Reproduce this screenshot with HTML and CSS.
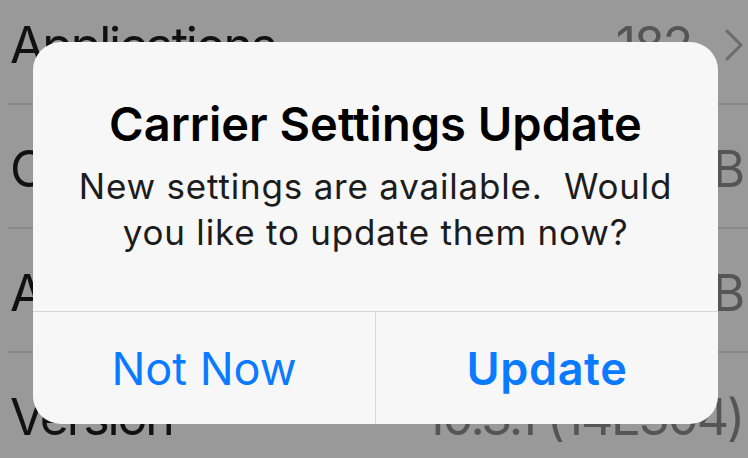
FILE: index.html
```html
<!DOCTYPE html>
<html lang="en">
<head>
    <meta charset="UTF-8">
    <meta name="viewport" content="width=device-width, initial-scale=1.0">
    <title>Carrier Settings Update</title>
    <link rel="stylesheet" href="styles.css">
</head>
<body>
    <!-- Settings list behind the alert -->
    <div class="settings-list">
        <div class="settings-row">
            <span class="row-label">Applications</span>
            <span class="row-value">182
                <svg class="chevron" width="18" height="32" viewBox="0 0 18 32">
                    <path d="M2 2 L16 16 L2 30" fill="none" stroke="#6b6b6b" stroke-width="3" stroke-linecap="round" stroke-linejoin="round"/>
                </svg>
            </span>
        </div>
        <div class="settings-row">
            <span class="row-label">Capacity</span>
            <span class="row-value">59.6 GB</span>
        </div>
        <div class="settings-row">
            <span class="row-label">Available</span>
            <span class="row-value">41.8 GB</span>
        </div>
        <div class="settings-row">
            <span class="row-label">Version</span>
            <span class="row-value">10.3.1 (14E304)</span>
        </div>
    </div>

    <!-- Alert -->
    <div class="alert">
        <div class="alert-content">
            <div class="alert-title">Carrier Settings Update</div>
            <div class="alert-message">New settings are available.&nbsp; Would<br>you like to update them now?</div>
        </div>
        <div class="alert-actions">
            <div class="alert-button">Not Now</div>
            <div class="alert-button alert-button-main">Update</div>
        </div>
    </div>
</body>
</html>
```

FILE: styles.css
```css
/* Общие стили */
body {
    font-family: 'Inter', 'Liberation Sans', sans-serif;
    margin: 0;
    padding: 0;
    width: 748px;
    height: 458px;
    overflow: hidden;
    background-color: #999999;
    position: relative;
}

/* Список настроек за алертом */
.settings-list {
    margin-top: -19px;
}

.settings-row {
    box-sizing: border-box;
    height: 124px;
    margin-left: 8px;
    padding: 6px 5px 0 2px;
    display: flex;
    justify-content: space-between;
    align-items: center;
    border-bottom: 2px solid #888888;
    font-size: 50px;
    letter-spacing: -2.2px;
}

.row-label {
    color: #111111;
}

.row-value {
    color: #555555;
    display: flex;
    align-items: center;
    gap: 34px;
}

.chevron {
    display: block;
}

/* Алерт */
.alert {
    position: absolute;
    top: 42px;
    left: 33px;
    width: 685px;
    height: 382px;
    background-color: #f7f7f7;
    border-radius: 28px;
    display: flex;
    flex-direction: column;
    overflow: hidden;
}

.alert-content {
    height: 270px;
    padding-top: 54px;
    box-sizing: border-box;
    text-align: center;
    border-bottom: 1px solid #d6d6d6;
}

.alert-title {
    font-size: 47px;
    line-height: 56px;
    font-weight: 600;
    color: #000000;
}

.alert-message {
    margin-top: 11px;
    font-size: 35px;
    line-height: 46px;
    letter-spacing: 0.8px;
    color: #1c1c1c;
}

.alert-actions {
    flex: 1;
    display: flex;
}

.alert-button {
    flex: 1;
    display: flex;
    justify-content: center;
    align-items: center;
    font-size: 45px;
    color: #0a7aff;
}

.alert-button-main {
    font-weight: 600;
    letter-spacing: 0.6px;
    border-left: 1px solid #d6d6d6;
}
```
